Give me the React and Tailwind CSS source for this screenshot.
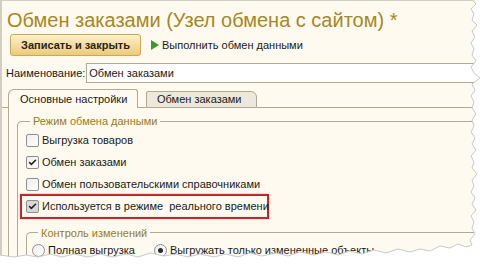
import { Check } from "lucide-react";

const RIGHT_EDGE = [
  [473, 0], [476, 4], [471, 9], [474, 14], [472, 20], [477, 25], [472, 31], [475, 37],
  [471, 43], [474, 49], [472, 55], [476, 61], [471, 67], [474, 73], [480, 78], [472, 84],
  [475, 90], [471, 96], [474, 102], [472, 108], [476, 114], [472, 120], [474, 126],
  [471, 132], [475, 138], [472, 144], [476, 150], [471, 156], [474, 162], [472, 168],
  [477, 174], [472, 180], [474, 186], [471, 192], [475, 198], [472, 204], [476, 210],
  [471, 216], [474, 222], [472, 228], [475, 234], [470, 240], [472, 245],
];

const BOTTOM_EDGE = [
  [466, 247], [458, 244], [450, 248], [440, 246], [430, 251], [420, 249], [410, 252],
  [398, 249], [386, 253], [374, 250], [362, 254], [350, 251], [338, 255], [326, 252],
  [314, 255], [300, 252], [288, 256], [276, 253], [262, 256], [250, 253], [238, 257],
  [226, 254], [214, 257], [200, 254], [188, 257], [176, 254], [164, 256], [150, 253],
  [138, 257], [126, 254], [112, 257], [100, 254], [88, 257], [74, 254], [62, 257],
  [50, 254], [38, 257], [26, 255], [14, 257], [0, 255],
];

function TornEdge() {
  const pts = [...RIGHT_EDGE, ...BOTTOM_EDGE];
  const line = pts.map(([x, y]) => `${x},${y}`).join(" ");
  const fill = `${line} 0,268 487,268 487,0`;
  return (
    <svg className="pointer-events-none absolute inset-0" width="487" height="268">
      <polygon points={fill} fill="#ffffff" />
      <polyline points={line} fill="none" stroke="#c9c9c9" strokeWidth="1" />
    </svg>
  );
}

function Checkbox({ checked, shaded }) {
  return (
    <span
      className={`flex h-[13px] w-[13px] shrink-0 items-center justify-center rounded-[2px] border border-[#8f8f8f] ${
        shaded ? "bg-[#d8d8d8]" : "bg-gradient-to-br from-[#eeeeee] to-white"
      }`}
    >
      {checked && <Check className="h-[9px] w-[9px] text-[#1f1f1f]" strokeWidth={4} />}
    </span>
  );
}

function CheckRow({ label, checked, shaded }) {
  return (
    <div className="flex h-[22px] items-center gap-[3px]">
      <Checkbox checked={checked} shaded={shaded} />
      <span>{label}</span>
    </div>
  );
}

function Radio({ checked }) {
  return (
    <span className="flex h-[13px] w-[13px] shrink-0 items-center justify-center rounded-full border border-[#8f8f8f] bg-gradient-to-br from-[#eeeeee] to-white">
      {checked && <span className="h-[5px] w-[5px] rounded-full bg-[#2b2b2b]" />}
    </span>
  );
}

export default function App() {
  return (
    <div className="relative h-[268px] w-[487px] overflow-hidden bg-white font-['Liberation_Sans',Arial,sans-serif] text-[11px] text-[#1a1a1a]">
      <div className="h-[268px] w-[487px] border-l-2 border-t border-[#d2cfc2] bg-[#fefaef] pt-[7px]">
        <h1 className="pl-[5px] text-[20px] leading-[24px] text-[#a8871f]">
          Обмен заказами (Узел обмена с сайтом) *
        </h1>

        <div className="mt-[2px] flex items-center pl-[8px]">
          <button className="h-[22px] w-[131px] rounded-[3px] border border-[#c9a85c] bg-gradient-to-b from-[#fdf0c8] to-[#ecca7c] pt-[1px] text-[11px] font-bold text-[#2a2418]">
            Записать и закрыть
          </button>
          <span className="ml-[10px] mr-[3px] h-0 w-0 border-y-[5px] border-l-[8px] border-y-transparent border-l-[#3c9a28]" />
          <span>Выполнить обмен данными</span>
        </div>

        <div className="mt-[7px] flex items-center pl-[4px]">
          <span className="mr-[1px]">Наименование:</span>
          <div className="flex h-[20px] flex-1 items-center border border-[#aeab90] bg-white pl-[2px]">
            Обмен заказами
          </div>
        </div>

        <div className="mt-[6px] flex items-end">
          <div className="h-[18px] w-[6px] border-b border-[#aeab90]" />
          <div className="flex h-[19px] w-[130px] items-center rounded-tl-[6px] rounded-tr-[3px] border border-b-0 border-[#aeab90] bg-[#fefaef] pl-[11px]">
            Основные настройки
          </div>
          <div className="h-[18px] w-[8px] border-b border-[#aeab90]" />
          <div className="flex h-[17px] w-[111px] items-center rounded-tr-[6px] rounded-tl-[2px] border border-[#aeab90] bg-[#ece8dc] pl-[10px]">
            Обмен заказами
          </div>
          <div className="h-[18px] flex-1 border-b border-[#aeab90]" />
        </div>

        <div className="ml-[6px] border-l border-[#aeab90] pl-[8px] pt-[5px]">
          <fieldset className="rounded-tl-[5px] border-l border-t border-[#aeab90] pb-[2px] pl-[8px]">
            <legend className="ml-[4px] px-[3px] text-[#9a7a1e]">Режим обмена данными</legend>
            <CheckRow label="Выгрузка товаров" />
            <CheckRow label="Обмен заказами" checked />
            <CheckRow label="Обмен пользовательскими справочниками" />
            <div className="-ml-[6px] -mt-[2px] flex h-[25px] w-[249px] items-center gap-[3px] whitespace-nowrap border-2 border-[#c0282d] pl-[4px] shadow-[0_0_2px_rgba(120,0,0,0.35)]">
              <Checkbox checked shaded />
              <span>Используется в режиме&nbsp; реального времени</span>
            </div>
            <fieldset className="mt-[6px] rounded-tl-[5px] border-l border-t border-[#aeab90] pl-[5px]">
              <legend className="ml-[6px] px-[3px] text-[#9a7a1e]">Контроль изменений</legend>
              <div className="flex h-[18px] items-center">
                <Radio />
                <span className="ml-[3px]">Полная выгрузка</span>
                <span className="ml-[19px]">
                  <Radio checked />
                </span>
                <span className="ml-[3px]">Выгружать только измененные объекты</span>
              </div>
            </fieldset>
          </fieldset>
        </div>
      </div>
      <TornEdge />
    </div>
  );
}
